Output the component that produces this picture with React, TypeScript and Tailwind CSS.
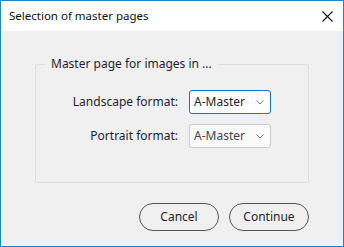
import React from "react";

const font = { fontFamily: '"Noto Sans", "Open Sans", sans-serif' };

const Chevron = () => (
  <svg width="8" height="5" viewBox="0 0 8 5" className="absolute right-[6px] top-[9px]">
    <path d="M0.5 0.5 L4 4 L7.5 0.5" fill="none" stroke="#777" strokeWidth="1" />
  </svg>
);

interface SelectBoxProps {
  value: string;
  focused?: boolean;
}

const SelectBox: React.FC<SelectBoxProps> = ({ value, focused }) => (
  <div
    className={
      focused
        ? "relative w-[82px] h-[24px] rounded-[3px] border border-[#0078d7] bg-white pl-[4px] flex items-center text-[12px] text-[#1e1e32]"
        : "relative w-[82px] h-[24px] rounded-[3px] border border-[#cccccc] bg-[#fafafa] pl-[4px] flex items-center text-[12px] text-[#44444e]"
    }
  >
    {value}
    <Chevron />
  </div>
);

export default function App() {
  return (
    <div
      className="w-[344px] h-[247px] border border-[#1883d7] flex flex-col bg-[#f0f0f0]"
      style={font}
    >
      {/* Title bar */}
      <div className="h-[30px] bg-white flex items-center justify-between pl-[8px] pr-[10px]">
        <span className="text-[11.5px] text-[#111]">Selection of master pages</span>
        <svg width="11" height="11" viewBox="0 0 11 11">
          <path d="M0.5 0.5 L10.5 10.5 M10.5 0.5 L0.5 10.5" stroke="#111" strokeWidth="1.1" />
        </svg>
      </div>

      {/* Body */}
      <div className="flex-1 flex flex-col px-[34px] pt-[24px]">
        <fieldset className="h-[128px] border border-[#dcdcdc] rounded-[3px] pt-[17px]">
          <legend className="ml-[9px] px-[6px] text-[12px] text-[#1e1e32]">
            Master page for images in ...
          </legend>
          <div className="grid grid-cols-[142px_82px] gap-x-[11px] gap-y-[10px] items-center">
            <span className="text-right text-[12px] text-[#1e1e32]">Landscape format:</span>
            <SelectBox value="A-Master" focused />
            <span className="text-right text-[12px] text-[#1e1e32]">Portrait format:</span>
            <SelectBox value="A-Master" />
          </div>
        </fieldset>

        <div className="flex justify-end gap-[10px] mt-[20px]">
          <button className="w-[80px] h-[28px] rounded-full border border-[#555] text-[12px] text-[#1e1e32]">
            Cancel
          </button>
          <button className="w-[80px] h-[28px] rounded-full border border-[#555] text-[12px] text-[#1e1e32]">
            Continue
          </button>
        </div>
      </div>
    </div>
  );
}
